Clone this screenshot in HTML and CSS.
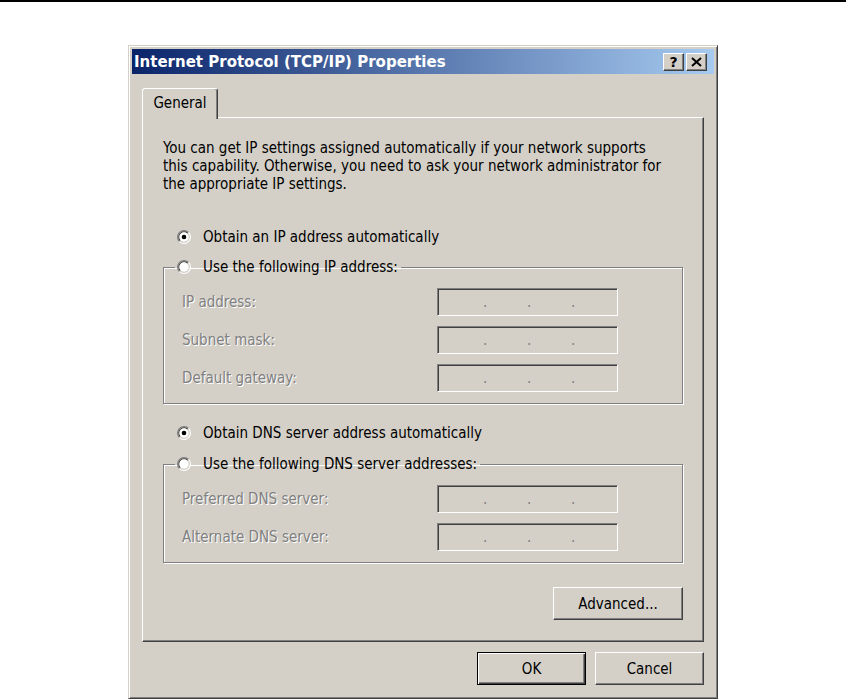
FILE: index.html
```html
<!DOCTYPE html>
<html lang="en">
<head>
<meta charset="utf-8">
<title>Internet Protocol (TCP/IP) Properties</title>
<link rel="stylesheet" href="styles.css">
</head>
<body>
<div class="topline"></div>
<div class="dialog">
  <div class="titlebar">
    <span class="title">Internet Protocol (TCP/IP) Properties</span>
    <div class="capbtns">
      <button class="capbtn help" type="button">?</button>
      <button class="capbtn close" type="button">
        <svg width="11" height="10" viewBox="0 0 11 10"><path d="M1 1 L10 9 M10 1 L1 9" stroke="#000" stroke-width="2" fill="none"/></svg>
      </button>
    </div>
  </div>
  <div class="body">
    <div class="tabs"><div class="tab">General</div></div>
    <div class="panel">
      <p class="intro">You can get IP settings assigned automatically if your network supports<br>this capability. Otherwise, you need to ask your network administrator for<br>the appropriate IP settings.</p>

      <div class="radio solo">
        <svg class="rb" width="14" height="14" viewBox="0 0 12 12"><path d="M2.11 9.89 A5.5 5.5 0 0 1 9.89 2.11" stroke="#808080" fill="none"/><path d="M9.89 2.11 A5.5 5.5 0 0 1 2.11 9.89" stroke="#fff" fill="none"/><path d="M2.82 9.18 A4.5 4.5 0 0 1 9.18 2.82" stroke="#404040" fill="none"/><path d="M9.18 2.82 A4.5 4.5 0 0 1 2.82 9.18" stroke="#d4d0c8" fill="none"/><circle cx="6" cy="6" r="4" fill="#fff"/><circle cx="6" cy="6" r="2" fill="#000"/></svg>
        <span>Obtain an IP address automatically</span>
      </div>

      <fieldset class="group">
        <legend>
          <span class="radio">
            <svg class="rb" width="14" height="14" viewBox="0 0 12 12"><path d="M2.11 9.89 A5.5 5.5 0 0 1 9.89 2.11" stroke="#808080" fill="none"/><path d="M9.89 2.11 A5.5 5.5 0 0 1 2.11 9.89" stroke="#fff" fill="none"/><path d="M2.82 9.18 A4.5 4.5 0 0 1 9.18 2.82" stroke="#404040" fill="none"/><path d="M9.18 2.82 A4.5 4.5 0 0 1 2.82 9.18" stroke="#d4d0c8" fill="none"/><circle cx="6" cy="6" r="4" fill="#fff"/></svg>
            <span>Use the following IP address:</span>
          </span>
        </legend>
        <div class="row"><span class="lbl">IP address:</span><div class="ipfield"><span>.</span><span>.</span><span>.</span></div></div>
        <div class="row"><span class="lbl">Subnet mask:</span><div class="ipfield"><span>.</span><span>.</span><span>.</span></div></div>
        <div class="row"><span class="lbl">Default gateway:</span><div class="ipfield"><span>.</span><span>.</span><span>.</span></div></div>
      </fieldset>

      <div class="radio solo second">
        <svg class="rb" width="14" height="14" viewBox="0 0 12 12"><path d="M2.11 9.89 A5.5 5.5 0 0 1 9.89 2.11" stroke="#808080" fill="none"/><path d="M9.89 2.11 A5.5 5.5 0 0 1 2.11 9.89" stroke="#fff" fill="none"/><path d="M2.82 9.18 A4.5 4.5 0 0 1 9.18 2.82" stroke="#404040" fill="none"/><path d="M9.18 2.82 A4.5 4.5 0 0 1 2.82 9.18" stroke="#d4d0c8" fill="none"/><circle cx="6" cy="6" r="4" fill="#fff"/><circle cx="6" cy="6" r="2" fill="#000"/></svg>
        <span>Obtain DNS server address automatically</span>
      </div>

      <fieldset class="group dns">
        <legend>
          <span class="radio">
            <svg class="rb" width="14" height="14" viewBox="0 0 12 12"><path d="M2.11 9.89 A5.5 5.5 0 0 1 9.89 2.11" stroke="#808080" fill="none"/><path d="M9.89 2.11 A5.5 5.5 0 0 1 2.11 9.89" stroke="#fff" fill="none"/><path d="M2.82 9.18 A4.5 4.5 0 0 1 9.18 2.82" stroke="#404040" fill="none"/><path d="M9.18 2.82 A4.5 4.5 0 0 1 2.82 9.18" stroke="#d4d0c8" fill="none"/><circle cx="6" cy="6" r="4" fill="#fff"/></svg>
            <span>Use the following DNS server addresses:</span>
          </span>
        </legend>
        <div class="row"><span class="lbl">Preferred DNS server:</span><div class="ipfield"><span>.</span><span>.</span><span>.</span></div></div>
        <div class="row"><span class="lbl">Alternate DNS server:</span><div class="ipfield"><span>.</span><span>.</span><span>.</span></div></div>
      </fieldset>

      <div class="adv-row"><button class="btn adv" type="button">Advanced...</button></div>
    </div>
    <div class="footer">
      <button class="btn default" type="button">OK</button>
      <button class="btn" type="button">Cancel</button>
    </div>
  </div>
</div>
</body>
</html>
```
FILE: styles.css
```css
* { box-sizing: border-box; }
html, body { margin: 0; background: #fff; }
body {
  font-family: "DejaVu Sans Condensed", "DejaVu Sans", sans-serif;
  font-stretch: semi-condensed;
  font-size: 15px;
  line-height: 18px;
  color: #000;
}
.topline { height: 2px; background: #000; }

.dialog {
  margin: 43px 0 0 128px;
  width: 590px;
  background: #d4d0c8;
  border: 1px solid;
  border-color: #d4d0c8 #404040 #404040 #d4d0c8;
  box-shadow: inset 1px 1px #fff, inset -1px -1px #808080;
  padding: 3px;
}

.titlebar {
  height: 25px;
  display: flex;
  align-items: center;
  justify-content: space-between;
  background: linear-gradient(to right, #0a246a, #a6caf0);
  padding: 0 7px 0 2px;
}
.title {
  color: #fff;
  font-family: "DejaVu Sans", sans-serif;
  font-stretch: normal;
  font-weight: bold;
  font-size: 15px;
  white-space: nowrap;
}
.capbtns { display: flex; gap: 2px; }
.capbtn {
  width: 21px; height: 18px; padding: 0;
  background: #d4d0c8;
  border: 1px solid;
  border-color: #fff #404040 #404040 #fff;
  box-shadow: inset -1px -1px #808080;
  font: bold 14px/16px "DejaVu Sans", sans-serif;
  color: #000;
  display: flex; align-items: center; justify-content: center;
}

.body { padding: 14px 10px 10px; }

.tabs { display: flex; position: relative; z-index: 1; margin-bottom: -2px; }
.tab {
  width: 76px; height: 31px;
  background: #d4d0c8;
  border: 1px solid;
  border-bottom: none;
  border-color: #fff #404040 transparent #fff;
  border-radius: 3px 3px 0 0;
  box-shadow: inset -1px 0 #808080;
  display: flex; align-items: center; justify-content: center;
  padding-bottom: 2px;
}

.panel {
  border: 1px solid;
  border-color: #fff #404040 #404040 #fff;
  box-shadow: inset -1px -1px #808080;
  padding: 21px 20px 21px 20px;
}
.intro { margin: 0; white-space: nowrap; }

.radio { display: flex; align-items: center; gap: 12px; height: 18px; white-space: nowrap; }
.rb { flex: none; }
.solo { margin: 35px 0 0 14px; }
.solo.second { margin-top: 20px; }

.group {
  margin: 12px 0 0;
  padding: 12px 0 11px;
  border: 1px solid #808080;
  box-shadow: inset 1px 1px #fff, 1px 1px #fff;
  min-width: 0;
}
.group.dns { margin-top: 13px; }
.group legend { padding: 0 3px 0 2px; margin-left: 11px; }

.row { display: flex; align-items: center; height: 28px; padding-left: 18px; }
.row + .row { margin-top: 10px; }
.lbl { width: 255px; color: #808080; text-shadow: 1px 1px 0 #fff; white-space: nowrap; }
.ipfield {
  width: 181px; height: 28px;
  border: 1px solid;
  border-color: #808080 #fff #fff #808080;
  box-shadow: inset 1px 1px #404040, inset -1px -1px #d4d0c8;
  display: flex; align-items: center;
  padding-left: 45px; gap: 40px;
  color: #808080;
}
.ipfield span { width: 4px; text-align: center; }

.adv-row { display: flex; justify-content: flex-end; margin-top: 24px; }
.btn {
  font: inherit;
  height: 33px;
  padding: 0;
  color: #000;
  background: #d4d0c8;
  border: 1px solid;
  border-color: #fff #404040 #404040 #fff;
  box-shadow: inset -1px -1px #808080;
}
.adv { width: 130px; }
.footer { display: flex; justify-content: flex-end; gap: 9px; margin-top: 10px; }
.footer .btn { width: 109px; }
.btn.default {
  border-color: #000;
  box-shadow: inset 1px 1px #fff, inset -1px -1px #404040, inset -2px -2px #808080;
}
```
